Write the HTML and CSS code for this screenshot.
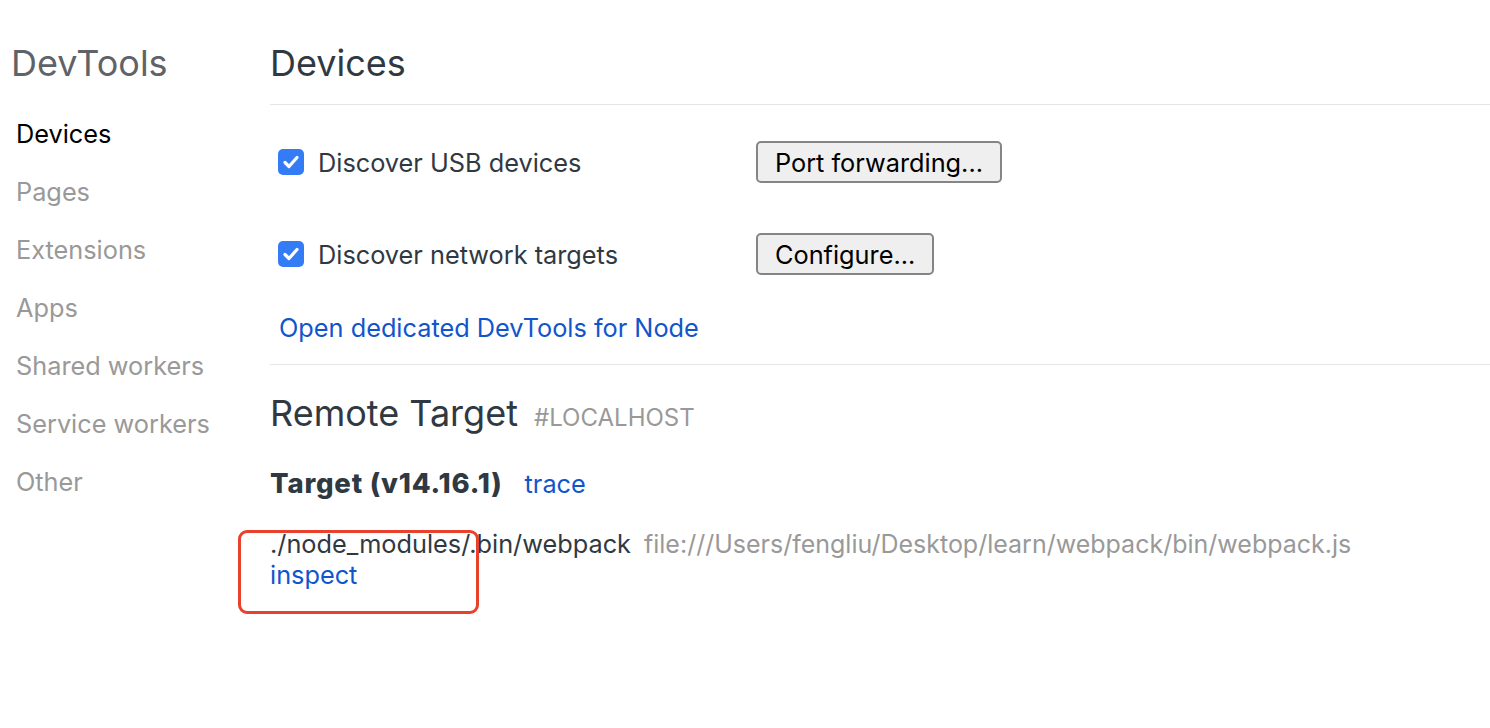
FILE: index.html
```html
<!DOCTYPE html>
<html>
<head>
<meta charset="utf-8">
<link rel="stylesheet" href="styles.css">
</head>
<body>
<div class="page">
  <nav class="sidebar">
    <div class="brand">DevTools</div>
    <ul class="nav">
      <li class="nav-item active">Devices</li>
      <li class="nav-item">Pages</li>
      <li class="nav-item">Extensions</li>
      <li class="nav-item">Apps</li>
      <li class="nav-item">Shared workers</li>
      <li class="nav-item">Service workers</li>
      <li class="nav-item">Other</li>
    </ul>
  </nav>
  <main class="main">
    <h1 class="section-title">Devices</h1>
    <div class="settings">
      <div class="setting-row">
        <label class="check-label">
          <span class="checkbox"><svg viewBox="0 0 26 26" width="26" height="26"><path d="M7 13.5l4 4 8-9" fill="none" stroke="#fff" stroke-width="3.2" stroke-linecap="round" stroke-linejoin="round"/></svg></span>
          <span>Discover USB devices</span>
        </label>
        <button class="btn">Port forwarding...</button>
      </div>
      <div class="setting-row">
        <label class="check-label">
          <span class="checkbox"><svg viewBox="0 0 26 26" width="26" height="26"><path d="M7 13.5l4 4 8-9" fill="none" stroke="#fff" stroke-width="3.2" stroke-linecap="round" stroke-linejoin="round"/></svg></span>
          <span>Discover network targets</span>
        </label>
        <button class="btn">Configure...</button>
      </div>
      <a class="link node-link">Open dedicated DevTools for Node</a>
    </div>
    <div class="remote">
      <h2 class="remote-title">Remote Target <span class="remote-sub">#LOCALHOST</span></h2>
      <div class="target-head"><span class="target-name">Target (v14.16.1)</span><a class="link trace">trace</a></div>
      <div class="target-item">
        <div class="target-line"><span class="target-path">./node_modules/.bin/webpack</span><span class="target-url">file:///Users/fengliu/Desktop/learn/webpack/bin/webpack.js</span></div>
        <a class="link inspect">inspect</a>
        <div class="annotation"></div>
      </div>
    </div>
  </main>
</div>
</body>
</html>
```
FILE: styles.css
```css
html, body {
  margin: 0;
  padding: 0;
  background: #fff;
}
body {
  font-family: Inter, "Noto Sans", sans-serif;
  font-size: 25.3px;
  color: #303942;
}
.page {
  display: flex;
  min-height: 728px;
}
.sidebar {
  width: 270px;
  flex: none;
  padding-top: 41px;
}
.brand {
  padding-left: 11px;
  font-size: 36px;
  line-height: 44px;
  color: #5f6368;
}
.nav {
  list-style: none;
  margin: 20px 0 0;
  padding: 0 0 0 16px;
}
.nav-item {
  line-height: 58px;
  color: #999;
}
.nav-item.active {
  color: #000;
}
.main {
  flex: 1;
  padding-top: 41px;
}
.section-title {
  margin: 0;
  font-size: 36px;
  line-height: 44px;
  font-weight: 400;
  padding-bottom: 19px;
  border-bottom: 1px solid #e6e6e6;
}
.settings {
  padding: 36px 0 21px 8px;
  border-bottom: 1px solid #e6e6e6;
}
.setting-row {
  display: flex;
  align-items: center;
  height: 42px;
  margin-bottom: 50px;
}
.setting-row:nth-child(2) {
  margin-bottom: 38px;
}
.check-label {
  width: 478px;
  display: flex;
  align-items: center;
  gap: 14px;
}
.checkbox {
  width: 26px;
  height: 26px;
  border-radius: 5px;
  background: #347cf6;
  display: flex;
}
.btn {
  font-family: inherit;
  font-size: 25.3px;
  color: #000;
  height: 42px;
  padding: 0 17px;
  background: #efefef;
  border: 2px solid #858585;
  border-radius: 5px;
}
.link {
  color: #1155cc;
  text-decoration: none;
}
.node-link {
  display: block;
  line-height: 30px;
  padding-left: 1px;
}
.remote {
  padding-top: 26px;
}
.remote-title {
  margin: 0;
  font-size: 36px;
  line-height: 44px;
  font-weight: 400;
}
.remote-sub {
  font-size: 24px;
  color: #999;
  margin-left: 6px;
}
.target-head {
  margin-top: 28px;
  line-height: 30px;
}
.target-name {
  font-size: 27.5px;
  font-weight: 800;
  letter-spacing: 0.8px;
}
.trace {
  margin-left: 22px;
}
.target-item {
  position: relative;
  margin-top: 30px;
  line-height: 30px;
}
.target-url {
  color: #999;
  font-size: 25px;
  margin-left: 13px;
}
.inspect {
  display: block;
  margin-top: 1px;
}
.annotation {
  position: absolute;
  left: -32px;
  top: 1px;
  width: 235px;
  height: 78px;
  border: 3px solid #e8412c;
  border-radius: 9px;
}
```
